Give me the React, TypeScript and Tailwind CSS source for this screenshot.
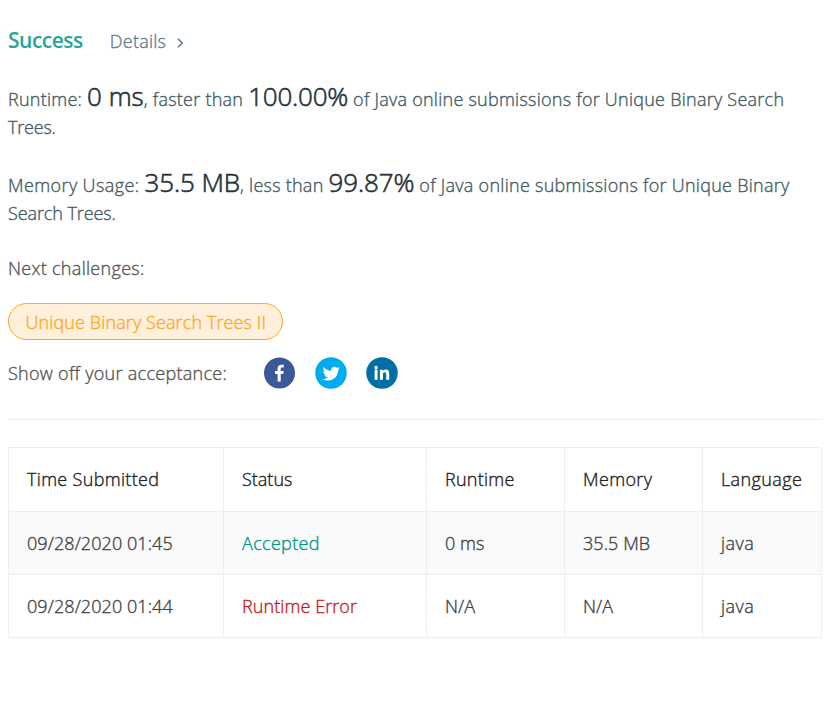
import React from "react";

const submissions = [
  { time: "09/28/2020 01:45", status: "Accepted", color: "text-[#009688] tracking-[0.33px]", runtime: "0 ms", memory: "35.5 MB", row: "bg-[#fafafa] h-[63px]" },
  { time: "09/28/2020 01:44", status: "Runtime Error", color: "text-[#c61a1a] tracking-[0.08px]", runtime: "N/A", memory: "N/A", row: "bg-white h-[63px]" },
];

function Facebook() {
  return (
    <svg className="block h-8 w-8" viewBox="0 0 64 64">
      <circle cx="31" cy="32" r="31" fill="#3b5998" />
      <path transform="translate(-4.800 -3.400) scale(1.12)" fill="#fff" d="M34.1 47V33.3h4.6l.7-5.3h-5.3v-3.5c0-1.5.4-2.6 2.6-2.6h2.8v-4.7c-.5-.1-2.2-.2-4.1-.2-4.1 0-6.9 2.5-6.9 7.1v3.9H24v5.3h4.6V47z" />
    </svg>
  );
}

function Twitter() {
  return (
    <svg className="block h-8 w-8" viewBox="0 0 64 64">
      <circle cx="32" cy="32" r="31.5" fill="#00aced" />
      <path transform="translate(-1.800 -1) scale(1.07)" fill="#fff" d="M48 22.1c-1.2.5-2.4.9-3.8 1 1.4-.8 2.4-2.1 2.9-3.6-1.3.8-2.7 1.3-4.2 1.6C41.7 19.8 40 19 38.2 19c-3.6 0-6.6 2.9-6.6 6.6 0 .5.1 1 .2 1.5-5.5-.3-10.3-2.9-13.5-6.9-.6 1-.9 2.1-.9 3.3 0 2.3 1.2 4.3 2.9 5.5-1.1 0-2.1-.3-3-.8v.1c0 3.2 2.3 5.8 5.3 6.4-.6.1-1.1.2-1.7.2-.4 0-.8 0-1.2-.1.8 2.6 3.3 4.5 6.1 4.6-2.2 1.8-5.1 2.8-8.2 2.8-.5 0-1.1 0-1.6-.1 2.9 1.9 6.4 2.9 10.1 2.9 12.1 0 18.7-10 18.7-18.7v-.8c1.2-1 2.3-2.1 3.2-3.4z" />
    </svg>
  );
}

function LinkedIn() {
  return (
    <svg className="block h-8 w-8" viewBox="0 0 64 64">
      <circle cx="32" cy="32" r="31.5" fill="#006fa6" />
      <path transform="translate(-.5 -3) scale(1.02 1.08)" fill="#fff" d="M17.4 45h5.8V26.2h-5.8V45zm2.9-19.4c1.8 0 3.3-1.5 3.3-3.3S22.1 19 20.3 19 17 20.5 17 22.3s1.5 3.3 3.3 3.3zM40.2 45H46V34.7c0-5.1-1.1-9-7-9-2.8 0-4.700 1.5-5.500 3h-.1v-2.500h-5.600V45h5.800v-9.300c0-2.500.5-4.900 3.500-4.900s3.100 2.800 3.100 5V45z" />
    </svg>
  );
}

export default function App() {
  return (
    <div className="h-[712px] w-[832px] overflow-hidden bg-white pl-2 pr-[10px] pt-[26px] font-['Open_Sans','Noto_Sans',sans-serif] text-[18px] font-light leading-7 tracking-[0.25px] whitespace-nowrap [-webkit-text-stroke:0.35px]">
      <div className="flex h-7 items-baseline">
        <span className="text-[21px] font-semibold leading-7 tracking-[-0.5px] text-[#26a69a] [-webkit-text-stroke:0px]">Success</span>
        <span className="ml-[27px] text-[#607d8b]">Details</span>
        <svg className="ml-[11px] h-[10px] w-[7px]" viewBox="0 0 7 10" fill="none" stroke="#607d8b" strokeWidth="1.6">
          <path d="M1 .8 5.2 5 1 9.2" />
        </svg>
      </div>

      <div className="mt-[28px] text-[#455a64]">
        <div className="flex h-[31px] items-baseline">
          <span>Runtime:&nbsp;</span>
          <span className="text-[26px] leading-7 tracking-normal text-[#263238] [-webkit-text-stroke:0.6px]">0 ms</span>
          <span>, faster than&nbsp;</span>
          <span className="text-[26px] leading-7 tracking-[-0.2px] text-[#263238] [-webkit-text-stroke:0.6px]">100.00%</span>
          <span>&nbsp;of Java online submissions for Unique Binary Search</span>
        </div>
        <div className="tracking-[-0.2px]">Trees.</div>
      </div>

      <div className="mt-[27px] text-[#455a64]">
        <div className="flex h-[31px] items-baseline">
          <span className="tracking-[0.4px]">Memory Usage:&nbsp;</span>
          <span className="text-[26px] leading-7 tracking-[-0.1px] text-[#263238] [-webkit-text-stroke:0.6px]">35.5 MB</span>
          <span>, less than&nbsp;</span>
          <span className="text-[26px] leading-7 tracking-[-0.1px] text-[#263238] [-webkit-text-stroke:0.6px]">99.87%</span>
          <span className="tracking-[0.27px]">&nbsp;of Java online submissions for Unique Binary</span>
        </div>
        <div className="tracking-[-0.1px]">Search Trees.</div>
      </div>

      <div className="mt-[27px] tracking-[0.3px] text-[#555]">Next challenges:</div>
      <div className="mt-[21px] flex h-[37px] w-[275px] items-center rounded-full border border-[#ffa726] bg-[#fff0dc] pl-[16.5px] tracking-[0.11px] text-[#ffa726]">
        <span>Unique Binary Search Trees II</span>
      </div>

      <div className="mt-[17px] flex h-8 items-center tracking-[0.28px] text-[#555]">
        <span className="w-[256px]">Show off your acceptance:</span>
        <div className="flex gap-[19px]">
          <Facebook />
          <Twitter />
          <LinkedIn />
        </div>
      </div>

      <div className="mt-[30px] h-px bg-[#eee]" />

      <table className="mt-[27px] w-[814px] table-fixed border-collapse text-left text-[#424242] [&_td]:border [&_td]:border-[#eee] [&_td]:pl-[18px] [&_th]:border [&_th]:border-[#eee] [&_th]:pb-0.5 [&_th]:pl-[18px] [&_th]:font-light">
        <colgroup>
          <col className="w-[215px]" />
          <col className="w-[203px]" />
          <col className="w-[138px]" />
          <col className="w-[138px]" />
          <col className="w-[119px]" />
        </colgroup>
        <thead>
          <tr className="h-16 text-[#212121]">
            <th className="tracking-[0.32px]">Time Submitted</th>
            <th className="tracking-normal">Status</th>
            <th>Runtime</th>
            <th className="tracking-[0.35px]">Memory</th>
            <th className="tracking-[0.38px]">Language</th>
          </tr>
        </thead>
        <tbody>
          {submissions.map((s) => (
            <tr key={s.time} className={s.row}>
              <td className="tracking-[0.08px]">{s.time}</td>
              <td className={s.color}>{s.status}</td>
              <td className="tracking-[0.05px]">{s.runtime}</td>
              <td className="tracking-[0.08px]">{s.memory}</td>
              <td className="tracking-[0.45px]">java</td>
            </tr>
          ))}
        </tbody>
      </table>
    </div>
  );
}
